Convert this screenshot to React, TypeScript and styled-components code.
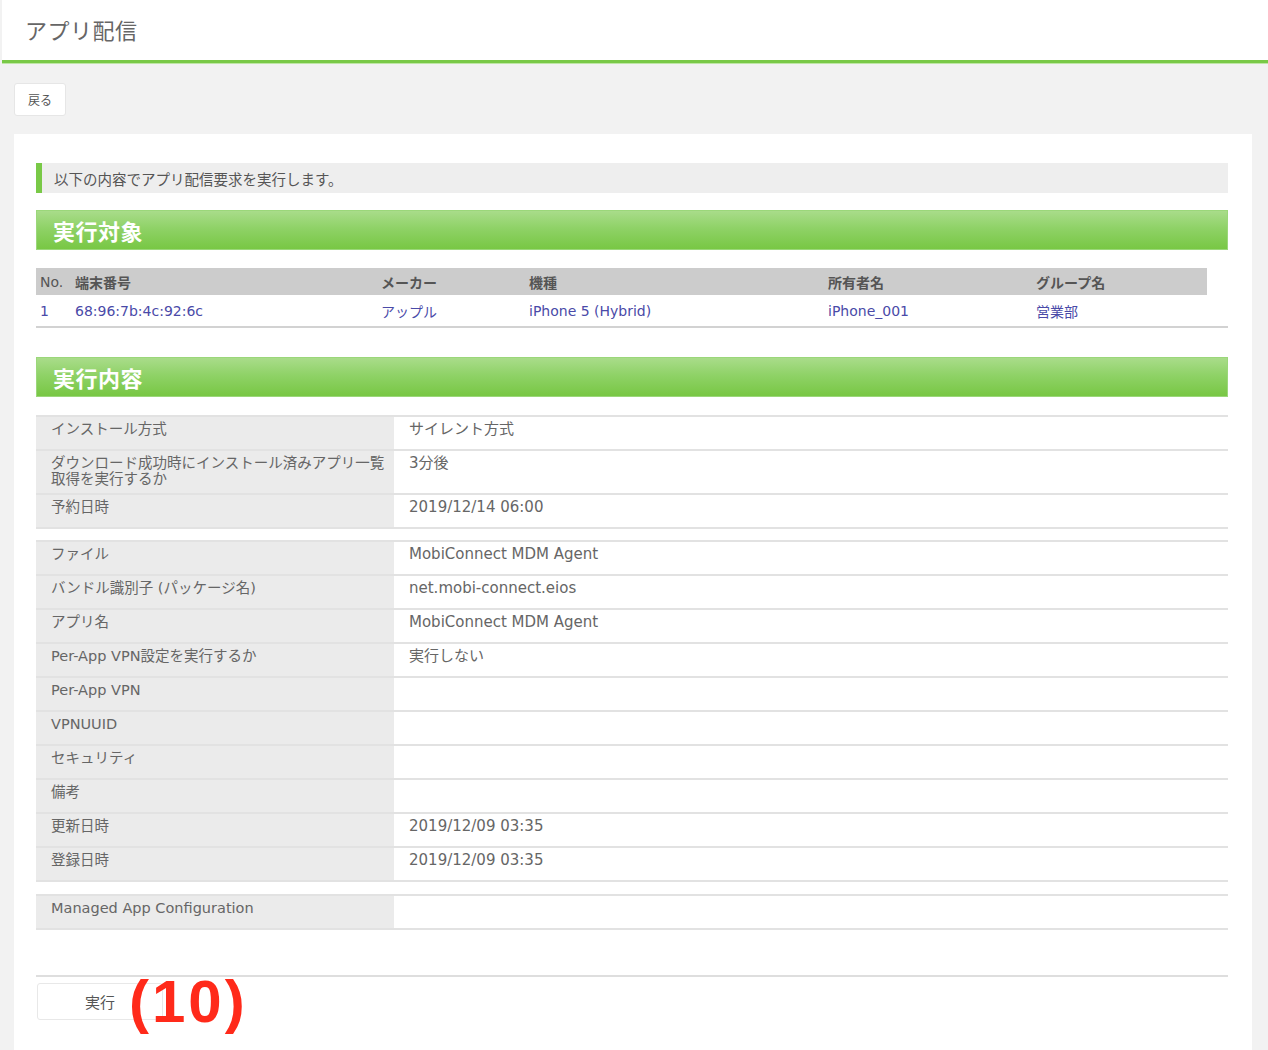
import React from "react";
import styled, { createGlobalStyle } from "styled-components";

const GlobalStyle = createGlobalStyle`
  html, body {
    margin: 0;
    padding: 0;
    background: #f2f2f2;
  }
  body {
    font-family: "DejaVu Sans", "Noto Sans CJK JP", sans-serif;
    color: #666;
  }
`;

const Header = styled.header`
  height: 60px;
  background: #fff;
  border-bottom: 3px solid #79c947;
  box-shadow: 0 1px 0 #bfe6a6;
  display: flex;
  align-items: center;
  padding-left: 23px;
  margin-left: 2px;
`;

const PageTitle = styled.h1`
  margin: 0 0 3px;
  font-family: "Noto Sans CJK JP", sans-serif;
  font-size: 22px;
  font-weight: 400;
  color: #666;
  letter-spacing: 0.5px;
`;

const Main = styled.main`
  padding: 20px 16px 0 14px;
`;

const BackButton = styled.button`
  width: 52px;
  height: 33px;
  background: #fff;
  border: 1px solid #e6e6e6;
  border-radius: 3px;
  font-family: "Noto Sans CJK JP", sans-serif;
  font-size: 12px;
  color: #555;
  padding: 0;
`;

const Panel = styled.section`
  margin-top: 18px;
  background: #fff;
  padding: 29px 24px 30px 22px;
  min-height: 880px;
  box-sizing: border-box;
`;

const Notice = styled.div`
  height: 30px;
  background: #eeeeee;
  border-left: 6px solid #79c947;
  display: flex;
  align-items: center;
  padding-left: 12px;
  font-size: 14.5px;
  color: #555;
`;

const SectionTitle = styled.h2<{ $top: number }>`
  margin: ${({ $top }) => $top}px 0 18px;
  height: 40px;
  box-sizing: border-box;
  background: linear-gradient(to bottom, #a9dc8a 0%, #8fd267 45%, #78c744 100%);
  border: 1px solid #9bd77a;
  color: #fff;
  font-family: "Noto Sans CJK JP", sans-serif;
  font-size: 22px;
  font-weight: 700;
  display: flex;
  align-items: center;
  padding-left: 16px;
  letter-spacing: 0.5px;
`;

const TargetTable = styled.div`
  border-bottom: 2px solid #d2d2d2;
`;

const TargetRow = styled.div<{ $head?: boolean }>`
  display: grid;
  grid-template-columns: 35px 306px 148px 299px 208px 1fr;
  width: calc(100% - 21px);
  height: ${({ $head }) => ($head ? 27 : 31)}px;
  align-items: center;
  background: ${({ $head }) => ($head ? "#cccccc" : "transparent")};
  font-size: 14px;
  color: ${({ $head }) => ($head ? "#555" : "#4a4aa8")};
  font-weight: ${({ $head }) => ($head ? 700 : 400)};
`;

const TargetCell = styled.span<{ $light?: boolean }>`
  padding-left: 4px;
  white-space: nowrap;
  font-weight: ${({ $light }) => ($light ? 400 : "inherit")};
`;

const DetailTable = styled.div<{ $top: number }>`
  margin-top: ${({ $top }) => $top}px;
  border-top: 2px solid #e2e2e2;
`;

const DetailRow = styled.div`
  display: grid;
  grid-template-columns: 358px 1fr;
  min-height: 32px;
  border-bottom: 2px solid #e2e2e2;
`;

const LabelCell = styled.div`
  background: #ebebeb;
  padding: 4px 0 6px 15px;
  line-height: 16px;
  font-size: 14.5px;
  color: #666;
  white-space: nowrap;
`;

const ValueCell = styled.div`
  padding: 4px 15px 6px 15px;
  line-height: 16px;
  font-size: 15px;
  color: #666;
`;

const Footer = styled.div`
  margin-top: 45px;
  border-top: 2px solid #dedede;
  padding-top: 6px;
  display: flex;
  align-items: center;
`;

const RunButton = styled.button`
  width: 126px;
  height: 37px;
  margin-left: 1px;
  background: #fff;
  border: 1px solid #e8e8e8;
  border-radius: 3px;
  font-family: "Noto Sans CJK JP", sans-serif;
  font-size: 15px;
  color: #555;
  padding: 0;
`;

const Callout = styled.span`
  position: relative;
  margin-left: -34px;
  font-family: "Liberation Sans", Arial, sans-serif;
  font-weight: 700;
  font-size: 60px;
  letter-spacing: 3px;
  line-height: 37px;
  color: #ff2a1a;
`;

type Detail = [React.ReactNode, React.ReactNode];

const firstGroup: Detail[] = [
  ["インストール方式", "サイレント方式"],
  [
    <>
      ダウンロード成功時にインストール済みアプリ一覧
      <br />
      取得を実行するか
    </>,
    "3分後",
  ],
  ["予約日時", "2019/12/14 06:00"],
];

const secondGroup: Detail[] = [
  ["ファイル", "MobiConnect MDM Agent"],
  ["バンドル識別子 (パッケージ名)", "net.mobi-connect.eios"],
  ["アプリ名", "MobiConnect MDM Agent"],
  ["Per-App VPN設定を実行するか", "実行しない"],
  ["Per-App VPN", ""],
  ["VPNUUID", ""],
  ["セキュリティ", ""],
  ["備考", ""],
  ["更新日時", "2019/12/09 03:35"],
  ["登録日時", "2019/12/09 03:35"],
];

const thirdGroup: Detail[] = [["Managed App Configuration", ""]];

const Details = ({ rows, top }: { rows: Detail[]; top: number }) => (
  <DetailTable $top={top}>
    {rows.map(([label, value], i) => (
      <DetailRow key={i}>
        <LabelCell>{label}</LabelCell>
        <ValueCell>{value}</ValueCell>
      </DetailRow>
    ))}
  </DetailTable>
);

export default function App() {
  return (
    <>
      <GlobalStyle />
      <Header>
        <PageTitle>アプリ配信</PageTitle>
      </Header>
      <Main>
        <BackButton>戻る</BackButton>
        <Panel>
          <Notice>以下の内容でアプリ配信要求を実行します。</Notice>

          <SectionTitle $top={17}>実行対象</SectionTitle>
          <TargetTable>
            <TargetRow $head>
              <TargetCell $light>No.</TargetCell>
              <TargetCell>端末番号</TargetCell>
              <TargetCell>メーカー</TargetCell>
              <TargetCell>機種</TargetCell>
              <TargetCell>所有者名</TargetCell>
              <TargetCell>グループ名</TargetCell>
            </TargetRow>
            <TargetRow>
              <TargetCell>1</TargetCell>
              <TargetCell>68:96:7b:4c:92:6c</TargetCell>
              <TargetCell>アップル</TargetCell>
              <TargetCell>iPhone 5 (Hybrid)</TargetCell>
              <TargetCell>iPhone_001</TargetCell>
              <TargetCell>営業部</TargetCell>
            </TargetRow>
          </TargetTable>

          <SectionTitle $top={29}>実行内容</SectionTitle>
          <Details rows={firstGroup} top={0} />
          <Details rows={secondGroup} top={11} />
          <Details rows={thirdGroup} top={12} />

          <Footer>
            <RunButton>実行</RunButton>
            <Callout>(10)</Callout>
          </Footer>
        </Panel>
      </Main>
    </>
  );
}
